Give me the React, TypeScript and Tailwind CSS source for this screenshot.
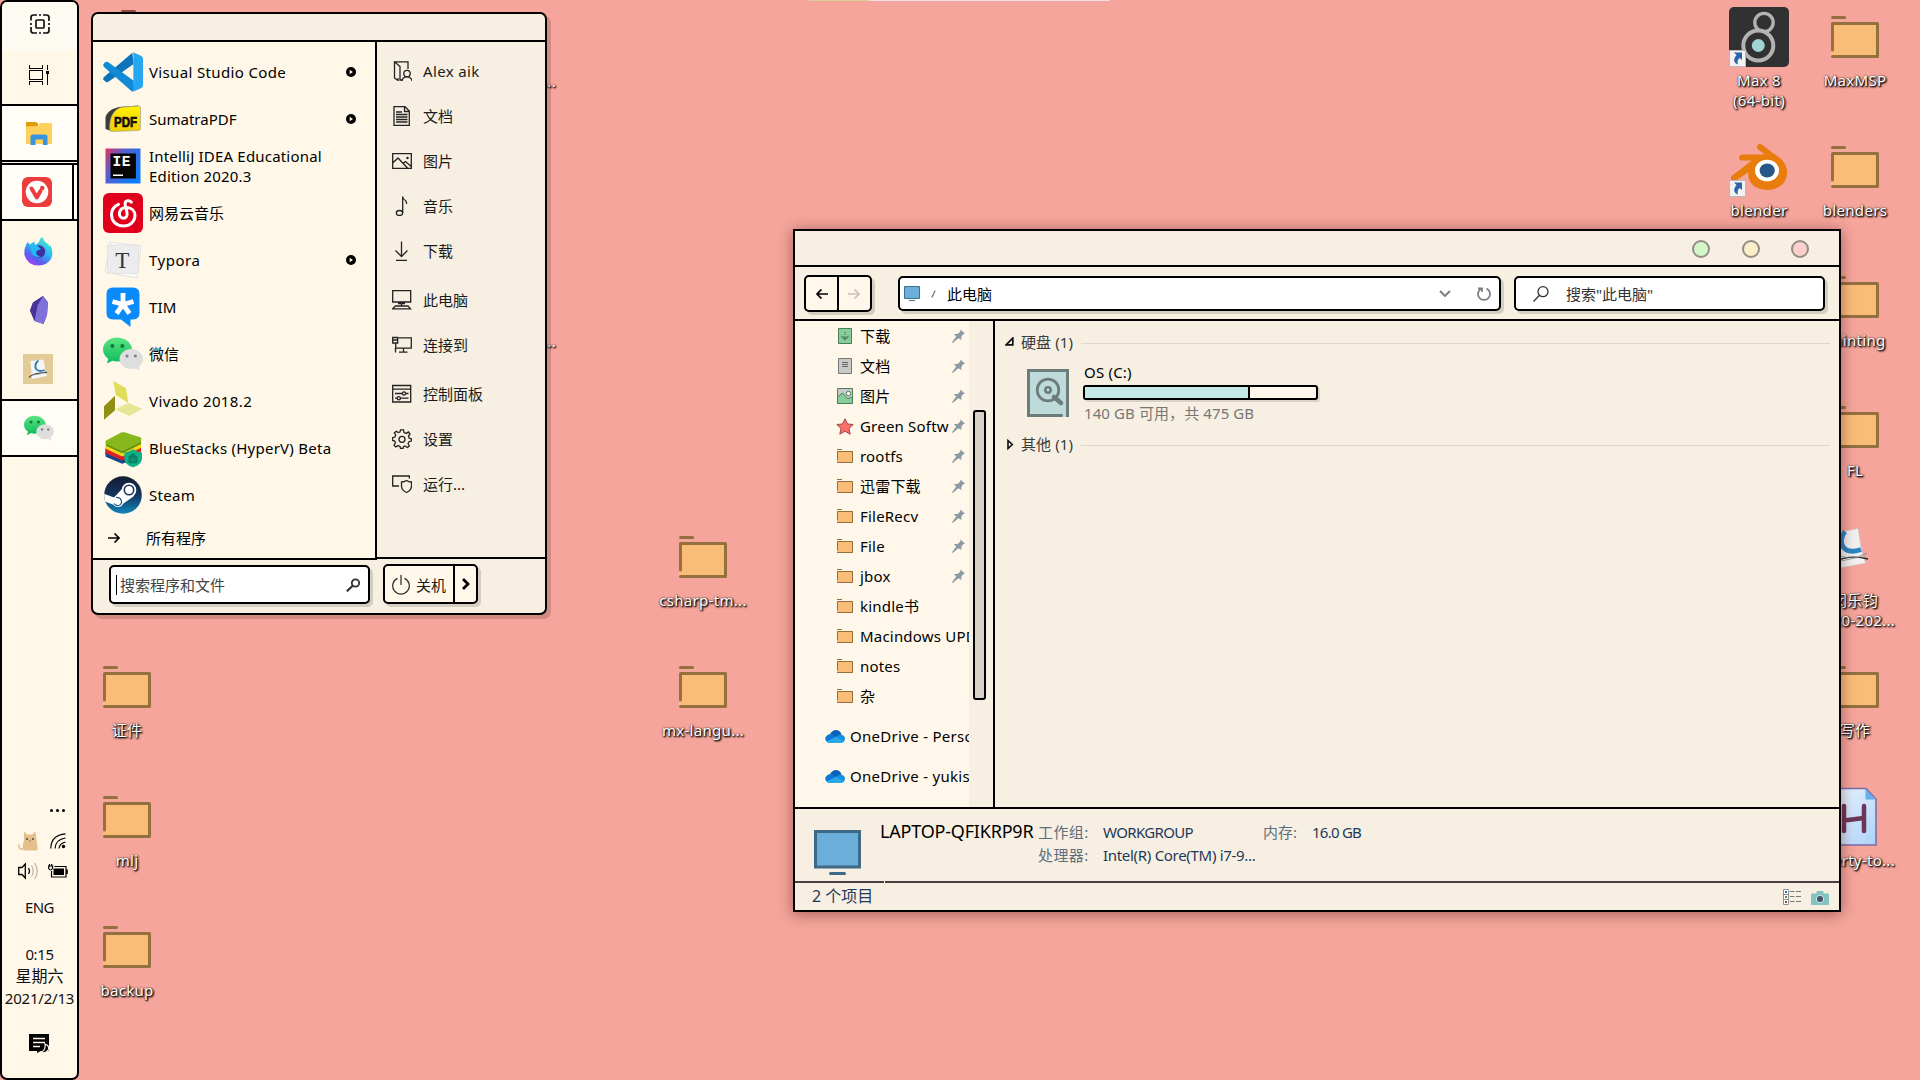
import React from "react";

type Kids = { children?: React.ReactNode };

/* ---------- desktop ---------- */

const Folder = () => (
  <svg width="48" height="42" viewBox="0 0 48 42" fill="none">
    <rect x="0" y="6" width="48" height="36" rx="1" fill="#fabd78" />
    <path d="M1.500 34V7.500H46.500V40.500H1.500" stroke="#94703f" strokeWidth="3" strokeLinecap="round" strokeLinejoin="round" />
    <path d="M1.500 1.500H13.500" stroke="#94703f" strokeWidth="3" strokeLinecap="round" />
  </svg>
);

const Shortcut = () => (
  <svg className="absolute left-0 bottom-0" width="17" height="17" viewBox="0 0 17 17">
    <rect x=".5" y=".5" width="16" height="16" fill="#f3f3f3" stroke="#b9b9b9" />
    <path d="M5 2.500H13V10L10.700 8C8.600 9.500 8.200 11.500 9 14.500C4.500 13 4 8.500 7.600 5.200Z" fill="#2f62a8" />
  </svg>
);

const MaxIcon = () => (
  <div className="relative w-15 h-15">
    <svg width="60" height="60" viewBox="0 0 60 60" fill="none">
      <rect width="60" height="60" rx="5" fill="#313131" />
      <circle cx="35" cy="15.500" r="9.200" stroke="#b2b2b2" strokeWidth="3.300" />
      <circle cx="29.300" cy="38.500" r="15" fill="#313131" stroke="#b2b2b2" strokeWidth="4" />
      <circle cx="29.300" cy="38.500" r="6.500" fill="#9fd4d2" />
    </svg>
    <Shortcut />
  </div>
);

const BlenderIcon = () => (
  <div className="relative w-15 h-15">
    <svg width="60" height="60" viewBox="0 0 60 60" fill="none">
      <path d="M31 10L50 24.500M13 20.500H36M5 41L28 23" stroke="#e87d0d" strokeWidth="6" strokeLinecap="round" />
      <path d="M3 39L25 23L36 17.500L46 17.500L52 22C64 33 58 53 38 53C23 52 18 43 19.500 35L8 43Z" fill="#e87d0d" />
      <ellipse cx="38" cy="33.500" rx="12" ry="10.800" fill="#fff" />
      <ellipse cx="38.200" cy="33.500" rx="7.600" ry="7" fill="#265787" />
    </svg>
    <Shortcut />
  </div>
);

const PdfDoc = () => (
  <svg width="60" height="60" viewBox="0 0 60 60" fill="none">
    <path d="M2 8L33 1.500L36.500 23L40.500 36L10 42L6 30Z" fill="#f1f1f1" stroke="#c9c9c9" strokeWidth=".6" />
    <path d="M20 4.500C12 14 17 29 36 22.500" stroke="#2b86c4" strokeWidth="5" />
    <path d="M6 36C18 30 30 28.500 43 32" stroke="#222" strokeWidth="1.300" />
    <path d="M14 34C24 33 34 30 41 26M16 29C26 32 36 32 42 26" stroke="#888" strokeWidth=".7" />
  </svg>
);

const ScriptIcon = () => (
  <svg width="48" height="60" viewBox="0 0 48 60" fill="none">
    <defs>
      <linearGradient id="ahk" x1="0" y1="0" x2="1" y2="1">
        <stop stopColor="#eef6ff" />
        <stop offset="1" stopColor="#acd3f8" />
      </linearGradient>
    </defs>
    <path d="M1 1.500H35L45 12V58H1Z" fill="url(#ahk)" stroke="#7b6aa8" strokeWidth="1.500" />
    <path d="M34.500 2V12.500H45Z" fill="#68aeea" />
    <path d="M13 19V44M33 19V44M13 33.500L33 31" stroke="#6e3559" strokeWidth="4.500" strokeLinecap="round" />
  </svg>
);

const LABEL =
  "text-white text-[15px] leading-5 tracking-[0.3px] text-center whitespace-nowrap [text-shadow:1px_1px_2px_#000,1px_1px_2px_rgba(0,0,0,0.9),0_0_2px_rgba(0,0,0,0.7)]";

const slots: Record<string, string> = {
  a5: "left-[79px] top-[651px]",
  a6: "left-[79px] top-[781px]",
  a7: "left-[79px] top-[911px]",
  g4: "left-[655px] top-[521px]",
  g5: "left-[655px] top-[651px]",
  y0: "left-[1711px] top-[1px]",
  y1: "left-[1711px] top-[131px]",
  z0: "left-[1807px] top-[1px]",
  z1: "left-[1807px] top-[131px]",
  z2: "left-[1807px] top-[261px]",
  z3: "left-[1807px] top-[391px]",
  z4: "left-[1807px] top-[521px]",
  z5: "left-[1807px] top-[651px]",
  z6: "left-[1807px] top-[781px]",
};

const Desk = ({ at, art, children }: Kids & { at: string; art?: React.ReactNode }) => (
  <div className={`absolute w-24 flex flex-col items-center ${slots[at]}`}>
    {art ? (
      <div className="pt-1.5 h-[69px] flex justify-center">{art}</div>
    ) : (
      <div className="pt-[15px] h-[69px]">
        <Folder />
      </div>
    )}
    <div className={LABEL}>{children}</div>
  </div>
);

/* ---------- application icons ---------- */

const WeChat = ({ s = 40 }: { s?: number }) => (
  <svg width={s} height={s} viewBox="0 0 40 40">
    <defs>
      <linearGradient id="wc" x1="0" y1="0" x2="0" y2="1">
        <stop stopColor="#5be681" />
        <stop offset="1" stopColor="#0cb95b" />
      </linearGradient>
    </defs>
    <path d="M14 3.500C6 3.500 0 9 0 15.500C0 19.500 2 22.500 5.200 24.800L4 29.500L9.400 26.800C11 27.200 12.600 27.500 14 27.500C22 27.500 29 22 29 15.500S22 3.500 14 3.500Z" fill="url(#wc)" />
    <circle cx="9.300" cy="12" r="2" fill="#15763f" />
    <circle cx="19.300" cy="12" r="2" fill="#15763f" />
    <path d="M28.300 15C22 15 16.500 19.500 16.500 25S22 35 28.300 35C29.600 35 31 34.800 32.200 34.400L36.500 36.500L35.500 32.700C38.500 30.500 40 28 40 25C40 19.500 34.600 15 28.300 15Z" fill="#dedede" />
    <circle cx="24" cy="22" r="1.600" fill="#838383" />
    <circle cx="32.300" cy="22" r="1.600" fill="#838383" />
  </svg>
);

const VsCode = () => (
  <svg width="40" height="40" viewBox="0 0 120 120">
    <path d="M88 2L92 36L15 90Q10 92 6 88L1 82Q0 78 3 75Z" fill="#0b74ba" />
    <path d="M3 45L86 118Q90 121 93 112L92 86L15 30Q10 28 6 31L1 37Q0 41 3 45Z" fill="#118bd6" />
    <path d="M89 0L115 12Q120 15 120 20V100Q120 106 115 108L89 120Q92 117 91 110V10Q92 3 89 0Z" fill="#27a6f2" />
  </svg>
);

const Sumatra = () => (
  <svg width="40" height="40" viewBox="0 0 40 40">
    <defs>
      <linearGradient id="sp" x1="0" y1="0" x2="0" y2="1">
        <stop stopColor="#fff200" />
        <stop offset="1" stopColor="#f0cd00" />
      </linearGradient>
    </defs>
    <path d="M2.500 30V18C5 11 12 8 22 7.500L36 6.500L24 14L8 32Z" fill="#3b3b3b" />
    <path d="M7 31C6 20 10 9 21 8L35.500 7Q37.500 7 37.500 9V29Q37.500 31.500 35 31.500L9 32.500Q7 32.500 7 31Z" fill="url(#sp)" stroke="#b5aa84" strokeWidth=".8" />
    <text x="11" y="27.500" textLength="23" lengthAdjust="spacingAndGlyphs" fontFamily="Liberation Sans" fontWeight="900" fontSize="14" stroke="#111" strokeWidth=".7" fill="#111">PDF</text>
  </svg>
);

const Idea = () => (
  <svg width="40" height="40" viewBox="0 0 40 40">
    <defs>
      <linearGradient id="ij" x1="0" y1="0" x2="1" y2=".7">
        <stop stopColor="#e0325f" />
        <stop offset=".4" stopColor="#5560d0" />
        <stop offset="1" stopColor="#0b7dfb" />
      </linearGradient>
    </defs>
    <rect x="2.500" y="2.500" width="35" height="35" fill="url(#ij)" />
    <rect x="7.500" y="7.500" width="25.500" height="25" fill="#050505" />
    <text x="9.500" y="20" fontFamily="Liberation Mono" fontWeight="700" fontSize="14.500" textLength="18" fill="#fff">IE</text>
    <rect x="10" y="28.500" width="10" height="1.500" fill="#fff" />
  </svg>
);

const NetEase = () => (
  <svg width="40" height="40" viewBox="0 0 40 40" fill="none">
    <rect width="40" height="40" rx="6" fill="#e0001b" />
    <path d="M28.500 9.200C26.500 7 22.300 7 22.100 10.300C22 12 23.300 16 24 19.500C24.700 23.500 22.800 25.200 20.400 25.200C17.500 25.200 16 22.500 16.500 19.500C17.200 16 20.500 14.500 23.600 14.500C28.500 14.600 32 17.800 32 22.600C32 28.700 26.800 33 20.500 33C13.500 33 8.500 28.500 8.500 21.800C8.500 17 11 13.200 15.500 11.300" stroke="#fff" strokeWidth="3" strokeLinecap="round" />
  </svg>
);

const Typora = () => (
  <svg width="40" height="40" viewBox="0 0 40 40">
    <path d="M7 2L38 6L34 38L2 32Z" fill="#fafafa" stroke="#d8d8d8" strokeWidth=".7" />
    <rect x="4.500" y="5" width="31" height="28.500" fill="#ececec" stroke="#dadada" strokeWidth=".6" />
    <text x="19.300" y="28" textAnchor="middle" fontFamily="Liberation Serif" fontSize="23" fill="#333">T</text>
  </svg>
);

const Tim = () => (
  <svg width="40" height="40" viewBox="0 0 40 40">
    <path d="M10 0.500H30Q36.500 .5 36.500 7V26Q36.500 32 30 32.500H27.500V40L18 32.500H10Q3.500 32.500 3.500 26V7Q3.500 .5 10 .5Z" fill="#0a8bfb" />
    <path d="M20 6V17.500M20 17.500L9.500 14.500M20 17.500L30.500 14.500M20 17.500L13.500 26.500M20 17.500L26.500 26.500" stroke="#fff" strokeWidth="4.800" />
  </svg>
);

const Vivado = () => (
  <svg width="40" height="40" viewBox="0 0 120 120">
    <path d="M31 0L69 22L76 66L38 42Z" fill="#dede5c" />
    <path d="M3 76L36 44V88L3 116Z" fill="#8f8f14" />
    <path d="M36 85L76 66L118 83L79 105Z" fill="#e5e693" />
  </svg>
);

const BlueStacks = () => (
  <svg width="40" height="40" viewBox="0 0 120 120">
    <path d="M6 72L50 50L114 66V88L62 106Q58 108 54 106L8 86Z" fill="#15468f" />
    <path d="M6 62L50 46L114 58V76L62 96Q58 98 54 96L8 76Z" fill="#d9202b" />
    <path d="M6 54L50 40L114 44V60L62 84Q58 86 54 84L8 62Z" fill="#f6d416" />
    <path d="M8 38L56 13Q60 12 64 13L112 28Q116 31 114 46L62 72Q58 74 54 72L9 50Q6 46 8 38Z" fill="#86b81b" />
    <path d="M9 48L54 68Q58 70 62 68L114 42V48L62 74Q58 76 54 74L9 53Z" fill="#5f9214" />
    <path d="M64 74Q80 72 90 64Q100 72 117 74V92Q115 110 90 118Q66 110 64 92Z" fill="#0fb184" />
    <path d="M78 86H102V104H78ZM83 86V82Q90 72 97 82V86" fill="#0d8a6a" stroke="#0a7a60" strokeWidth="3" />
    <circle cx="90" cy="95" r="3" fill="#0fb184" />
  </svg>
);

const Steam = () => (
  <svg width="40" height="40" viewBox="0 0 40 40" fill="none">
    <defs>
      <linearGradient id="st" x1="0" y1="0" x2="0" y2="1">
        <stop stopColor="#141d31" />
        <stop offset=".5" stopColor="#14335f" />
        <stop offset="1" stopColor="#1287bd" />
      </linearGradient>
      <clipPath id="stc">
        <circle cx="20" cy="20" r="18.800" />
      </clipPath>
    </defs>
    <circle cx="20" cy="20" r="18.800" fill="url(#st)" />
    <g clipPath="url(#stc)">
      <path d="M0 18.500L11 22.500L19 14L31 21L20.500 28.500L14 31L0 26Z" fill="#fff" />
      <circle cx="26" cy="15" r="7.300" fill="#fff" />
      <circle cx="26" cy="15" r="4.700" fill="#fff" stroke="#1b3158" strokeWidth="1.600" />
      <circle cx="15" cy="26.500" r="5.500" fill="#fff" />
      <path d="M13 22.500C19 22 20.500 29.500 15.500 30.500C13.500 30.700 12 30 11 28.500" stroke="#1a4f80" strokeWidth="1.200" />
    </g>
  </svg>
);

/* ---------- taskbar ---------- */

const ScreenSnip = () => (
  <svg width="20" height="20" viewBox="0 0 20 20" fill="none" stroke="#111" strokeWidth="1.700">
    <path d="M1 6.500V3.500Q1 1 3.500 1H7M9 1H11M13 1H16.500Q19 1 19 3.500V7M19 13V16.500Q19 19 16.500 19H13M7 19H3.500Q1 19 1 16.500V13M1 9V11M19 9V11M9 19H11" />
    <rect x="6" y="6" width="8" height="8" rx="1" />
  </svg>
);
const TaskView = () => (
  <svg width="20" height="20" viewBox="0 0 20 20" fill="none" stroke="#000" shapeRendering="crispEdges">
    <path d="M.5 0V3.500H13.500V0M.5 20V16.500H13.500V20M.5 5.500H13.500V14.500H.5ZM18.500 0V5M18.500 9V20" />
    <rect x="17" y="6" width="3" height="3" fill="#000" stroke="none" />
  </svg>
);
const ExplorerIcon = () => (
  <svg width="26" height="23" viewBox="0 0 26 23">
    <path d="M0 0H10L12 1.500V5H0Z" fill="#dd9c08" />
    <path d="M0 4.500L12 4L14 1H26V22H0Z" fill="#ffd15c" />
    <path d="M4.500 23V15Q4.500 12.500 7 12.500H19Q21.500 12.500 21.500 15V23H17V17.500H9.500V23Z" fill="#3695dd" />
  </svg>
);
const VivaldiIcon = () => (
  <svg width="30" height="30" viewBox="0 0 30 30" fill="none">
    <rect width="30" height="30" rx="6" fill="#ed3c3c" />
    <circle cx="15" cy="15" r="11.300" fill="#fff" />
    <path d="M9.500 11.500L14.800 20.500L18.500 14" stroke="#ed3c3c" strokeWidth="4" strokeLinecap="round" strokeLinejoin="round" />
    <circle cx="20.300" cy="11" r="2.300" fill="#ed3c3c" />
  </svg>
);
const FirefoxIcon = () => (
  <svg width="29" height="30" viewBox="0 0 29 30">
    <defs>
      <linearGradient id="ff" x1=".8" y1="0" x2=".2" y2="1">
        <stop stopColor="#4bf0c8" />
        <stop offset=".45" stopColor="#2fb4f5" />
        <stop offset=".75" stopColor="#5b5cf0" />
        <stop offset="1" stopColor="#b53cf2" />
      </linearGradient>
    </defs>
    <path d="M2 9L3.500 6L6 8.500L10 5.500L11.500 9L15 6Q16 2 18.500 1Q20 6 24 8L25.500 10.500L26.500 9Q30 17 27 23Q22 30 14 29.500Q3 29 .5 19Q0 13 2 9Z" fill="url(#ff)" />
    <circle cx="15" cy="15.500" r="6.200" fill="#40309f" />
    <path d="M5 9L13 9.500L17 13L12.500 15Q11 20 17 20Q11 23 8 17Z" fill="#25b9f4" />
  </svg>
);
const ObsidianIcon = () => (
  <svg width="18" height="28" viewBox="0 0 18 28">
    <path d="M13 0L18 6.500L17 19L13.500 28L4.500 25L0 14.500L3 6.500Z" fill="#5a45b5" />
    <path d="M13 0L18 6.500L17 19L13.500 28L4.500 25L7.500 9Z" fill="#8070da" />
    <path d="M3 6.500L13 0L7.500 9L4.500 25L0 14.500Z" fill="#493596" />
  </svg>
);
const ReaderIcon = () => (
  <div className="w-[30px] h-[30px] bg-[#e2cb97]">
    <svg width="30" height="30" viewBox="0 0 30 30" fill="none">
      <path d="M7.500 7L20.500 5.500L22.500 17L24 22L9 25Z" fill="#f6f6f6" />
      <path d="M15.500 6.500Q11 10 13 15Q16 18.500 21.500 16" stroke="#2c7fba" strokeWidth="1.900" />
      <path d="M6 23.500Q9 19 24 18.500" stroke="#333" strokeWidth="1.100" />
      <path d="M9 21Q18 21 23 17" stroke="#888" strokeWidth=".7" />
    </svg>
  </div>
);
const Cat = () => (
  <svg width="21" height="20" viewBox="0 0 21 20" fill="none">
    <path d="M5 18Q.5 19 .8 13.500" stroke="#e0be8e" strokeWidth="1.600" />
    <path d="M6 .5L9 3.500H14L17.500 .5L18.500 9Q20.500 19 19 19.500H6Q3.500 17 6 9Z" fill="#e6c08c" />
    <circle cx="9" cy="8" r=".9" fill="#4a3a2a" />
    <circle cx="15" cy="8" r=".9" fill="#4a3a2a" />
    <circle cx="12" cy="10" r=".7" fill="#7a5a3a" />
  </svg>
);
const Wifi = () => (
  <svg width="17" height="16" viewBox="0 0 17 16" fill="none" stroke="#000" strokeWidth="1.200">
    <path d="M.8 15.500Q1 2 15.500 .8M5 15.500Q5.500 6.500 15.500 5M9 15.500Q9.500 10.500 15.500 9" />
    <circle cx="13.500" cy="13.500" r="1.700" fill="#000" stroke="none" />
  </svg>
);
const Speaker = () => (
  <svg width="21" height="18" viewBox="0 0 21 18" fill="none">
    <path d="M.7 5.500H4L7.300 2V16L4 12.500H.7Z" stroke="#000" strokeWidth="1.300" />
    <path d="M10.500 6Q12.500 9 10.500 12" stroke="#000" strokeWidth="1.200" />
    <path d="M13.500 3.500Q17 9 13.500 14.500M16.500 .8Q22 9 16.500 17.200" stroke="#b9b3a9" strokeWidth="1.200" />
  </svg>
);
const Battery = () => (
  <svg width="20" height="14" viewBox="0 0 20 14" fill="none">
    <path d="M6.500 2.500H18V13H3.500V7M19.200 5.500V10" stroke="#000" strokeWidth="1.200" />
    <rect x="5.500" y="4.500" width="10.500" height="6.500" fill="#000" />
    <path d="M.7 1.500V4.500Q2.500 7.500 4.500 4.500V1.500M1.500 0V2M3.700 0V2M0 2H5.300" stroke="#000" strokeWidth="1.200" />
  </svg>
);
const Notice = () => (
  <svg width="21" height="20" viewBox="0 0 21 20" fill="none">
    <path d="M0 0H20V17H12L8 19V17H0Z" fill="#000" />
    <path d="M4 4.500H16M4 8.500H16M4 12.500H11" stroke="#fff8ea" strokeWidth="1.300" />
    <path d="M16 10Q20.500 11.500 19.500 15.500Q17 20.500 12 18Q17 16.500 16 10Z" fill="#000" stroke="#fff8ea" strokeWidth="1.200" />
  </svg>
);

const Taskbar = () => (
  <div className="absolute left-0 top-0 w-[79px] h-[1080px] flex flex-col items-stretch border-2 border-black rounded-[7px] bg-[#fff8e9] overflow-hidden text-[15px] text-[#111]">
    <div className="-mx-0.5 -mt-0.5 h-[50px] shrink-0 flex items-start justify-center pt-3.5 rounded-t-[7px] border-2 border-b-0 border-[#4c4a46] bg-[#fefbf3]">
      <div className="-mt-0.5">
        <ScreenSnip />
      </div>
    </div>
    <div className="h-[54px] shrink-0 flex justify-center pt-[15px] pr-px">
      <TaskView />
    </div>
    <div className="h-[58px] shrink-0 flex items-center justify-center border-y-2 border-black bg-[#fffdf6] pr-px">
      <ExplorerIcon />
    </div>
    <div className="mt-px h-[58px] shrink-0 flex border-y-2 border-black bg-[#fffdf6]">
      <div className="w-[72px] flex items-center justify-center border-r-2 border-black">
        <VivaldiIcon />
      </div>
    </div>
    <div className="h-[59px] shrink-0 flex items-center justify-center pr-0.5">
      <FirefoxIcon />
    </div>
    <div className="h-[60px] shrink-0 flex items-center justify-center pr-px">
      <ObsidianIcon />
    </div>
    <div className="h-[59px] shrink-0 flex items-center justify-center pr-[3px] pb-px">
      <ReaderIcon />
    </div>
    <div className="h-[58px] shrink-0 flex items-center justify-center border-y-2 border-black bg-[#fffdf6] pr-0.5">
      <WeChat s={30} />
    </div>
    <div className="flex-1" />
    <div className="flex flex-col items-center h-[269px] shrink-0">
      <div className="w-full flex justify-end gap-[3px] pr-3">
        <i className="w-[3px] h-[3px] rounded-full bg-black" />
        <i className="w-[3px] h-[3px] rounded-full bg-black" />
        <i className="w-[3px] h-[3px] rounded-full bg-black" />
      </div>
      <div className="w-full flex items-center justify-between pl-4 pr-[10px] mt-[19px] h-5">
        <Cat />
        <Wifi />
      </div>
      <div className="w-full flex items-center justify-between pl-4 pr-[9px] mt-[10px] h-5">
        <Speaker />
        <Battery />
      </div>
      <div className="mt-4 leading-5 h-5 tracking-[-0.6px]">ENG</div>
      <div className="mt-[26px] leading-[22px] flex flex-col items-center">
        <span className="tracking-[-0.4px]">0:15</span>
        <span className="text-[16px]">星期六</span>
        <span className="tracking-[-0.2px]">2021/2/13</span>
      </div>
      <div className="mt-[25px] pr-px">
        <Notice />
      </div>
    </div>
  </div>
);

/* ---------- start menu ---------- */

const apps: { icon: React.ReactNode; name: React.ReactNode; more?: boolean; fit?: string }[] = [
  { icon: <VsCode />, name: "Visual Studio Code", more: true, fit: "tracking-[0.35px]" },
  { icon: <Sumatra />, name: "SumatraPDF", more: true },
  { icon: <Idea />, name: <>IntelliJ IDEA Educational<br />Edition 2020.3</>, fit: "tracking-[0.19px]" },
  { icon: <NetEase />, name: "网易云音乐" },
  { icon: <Typora />, name: "Typora", more: true, fit: "tracking-[0.5px]" },
  { icon: <Tim />, name: "TIM", fit: "tracking-[0.2px]" },
  { icon: <WeChat />, name: "微信" },
  { icon: <Vivado />, name: "Vivado 2018.2", fit: "tracking-[0.4px]" },
  { icon: <BlueStacks />, name: "BlueStacks (HyperV) Beta", fit: "tracking-[0.25px]" },
  { icon: <Steam />, name: "Steam", fit: "tracking-[0.3px]" },
];

const More = () => (
  <svg width="10" height="10" viewBox="0 0 10 10">
    <circle cx="5" cy="5" r="5" fill="#000" />
    <path d="M3.700 2.700L7 5L3.700 7.300Z" fill="#fef7e9" />
  </svg>
);

const Line = ({ children }: Kids) => (
  <svg width="20" height="20" viewBox="0 0 20 20" fill="none" stroke="#222" strokeWidth="1.300">
    {children}
  </svg>
);

const places: { name: string; art: React.ReactNode; gap?: boolean }[] = [
  {
    name: "Alex aik",
    art: (
      <Line>
        <path d="M10.500 19H8V5.500L2.500 .8V17L6 19.500V17M2.500 .8H16V8" />
        <circle cx="15" cy="12.500" r="3.200" />
        <path d="M10 20Q10.500 15.800 15 15.800T20 20" />
      </Line>
    ),
  },
  {
    name: "文档",
    art: (
      <Line>
        <path d="M2 .7H13L17.300 5V19.300H2ZM12.500 .7V5.500H17.300M4 6H10M4 8.500H15.500M4 11H15.500M4 13.500H15.500M4 16H15.500" />
      </Line>
    ),
  },
  {
    name: "图片",
    art: (
      <Line>
        <path d="M.7 2.700H19.300V17.300H.7ZM.7 12L6 7L15.500 17M11 12.500L13.500 10.500L19.300 15.500" />
        <circle cx="15.500" cy="7" r=".6" />
      </Line>
    ),
  },
  {
    name: "音乐",
    art: (
      <Line>
        <ellipse cx="7.500" cy="17" rx="3.200" ry="2.500" />
        <path d="M10.700 17V.5Q11 3.500 13.500 4.500Q14.800 5.500 14.500 8" />
      </Line>
    ),
  },
  {
    name: "下载",
    gap: true,
    art: (
      <Line>
        <path d="M9.500 .5V15.500M3.500 9.500L9.500 15.500L15.500 9.500M4 19.300H15" />
      </Line>
    ),
  },
  {
    name: "此电脑",
    art: (
      <Line>
        <path d="M.7 .7H18.700V12H.7ZM9.500 12V15.500M6 13.500H13M3.500 16H16L18.500 18.800H.7Z" />
      </Line>
    ),
  },
  {
    name: "连接到",
    gap: true,
    art: (
      <Line>
        <path d="M6.500 2.800H19.300V13.200H3.700V8M.7 2.500H5.700V8H.7ZM.7 5H5.700M11.500 13.200V17M7 17.200H15.500M3.500 13V17.500" />
      </Line>
    ),
  },
  {
    name: "控制面板",
    art: (
      <Line>
        <path d="M.7 1.500H18.700V18H.7ZM.7 5.200H18.700M3 9.500H10M13.500 9.500H16.500M3 14.200H5M8.500 14.200H16.500" />
        <circle cx="12" cy="9.500" r="1.600" />
        <circle cx="6.800" cy="14.200" r="1.600" />
      </Line>
    ),
  },
  {
    name: "设置",
    art: (
      <Line>
        <path d="M8.500 .8H11.500L12 3.500L14.200 4.400L16.500 2.900L18 5L16.500 7L17 9L19.300 9.800V12L17 12.700L16 14.800L17.400 17L15.300 18.500L13 17L11.500 17.700L11 19.500H8.500L8 17.500L6 16.600L3.700 18L2 16.200L3.500 13.800L2.700 12L.5 11.500V8.800L2.900 8L3.700 6L2.300 3.900L4.200 2.200L6.300 3.600L8 3Z" />
        <circle cx="10" cy="10.300" r="3" />
      </Line>
    ),
  },
  {
    name: "运行...",
    art: (
      <Line>
        <path d="M7 12H.7V2H17.300V4.500M14.500 6.500Q12.500 8 9.500 8V12.500Q10 16.500 14.500 18.500Q19 16.500 19.500 12.500V8Q16.500 8 14.500 6.500Z" />
      </Line>
    ),
  },
];

const StartMenu = () => (
  <div className="absolute left-[91px] top-3 w-[456px] h-[603px] flex flex-col border-2 border-black rounded-[7px] overflow-hidden bg-[#f7f0e2] text-[15px] text-black">
    <div className="h-7 shrink-0 border-b-2 border-black" />
    <div className="flex h-[518px] shrink-0 items-start">
      <div className="w-[284px] h-[518px] flex flex-col bg-[#fff8e9] border-r-2 border-b-2 border-black pt-[6px]">
        {apps.map((a, i) => (
          <div key={i} className="h-[47px] shrink-0 flex items-center pl-2.5 pr-[19px]">
            {a.icon}
            <span className={`ml-1.5 flex-1 leading-5 whitespace-nowrap ${a.fit ?? ""}`}>{a.name}</span>
            {a.more && <More />}
          </div>
        ))}
        <div className="h-10 flex items-center pl-[15px]">
          <svg className="mb-px" width="12" height="10" viewBox="0 0 12 10" fill="none" stroke="#000" strokeWidth="1.600">
            <path d="M0 5H11M6.500 .5L11 5L6.500 9.500" />
          </svg>
          <span className="ml-[26px]">所有程序</span>
        </div>
      </div>
      <div className="flex-1 h-[517px] border-b-2 border-black pt-1.5">
        {places.map((p, i) => (
          <div key={p.name} className={`h-[45px] flex items-center pl-[15px] text-[#1b1b1b] ${p.gap ? "mb-1" : ""}`}>
            {p.art}
            <span className={`ml-[11px] pt-px ${i ? "" : "tracking-[0.35px]"}`}>{p.name}</span>
          </div>
        ))}
      </div>
    </div>
    <div className="flex-1 flex items-start pl-4 pt-[5px]">
      <div className="w-[261px] h-[39px] flex items-center border-2 border-black rounded-[5px] bg-white shadow-[3px_3px_0_rgba(0,0,0,0.14)]">
        <i className="ml-[5px] w-px h-5 bg-black" />
        <span className="ml-[3px] pt-0.5 flex-1 text-[#444]">搜索程序和文件</span>
        <svg className="mr-[7px]" width="15" height="14" viewBox="0 0 15 14" fill="none" stroke="#333" strokeWidth="1.800">
          <circle cx="9.500" cy="5" r="3.700" />
          <path d="M7 7.500L.8 13.300" strokeWidth="2.200" />
        </svg>
      </div>
      <div className="ml-[13px] -mt-px w-[95px] h-10 flex border-2 border-black rounded-[5px] bg-[#fff8ea] shadow-[3px_3px_0_rgba(0,0,0,0.14)]">
        <div className="w-[70px] flex items-center border-r-2 border-black pl-[7px] pt-px">
          <svg width="18" height="20" viewBox="0 0 18 20" fill="none" stroke="#333" strokeWidth="1.300">
            <path d="M5.500 3.300A8.300 8.300 0 1 0 12.500 3.300M9 0V10" />
          </svg>
          <span className="ml-1.5 pt-0.5 whitespace-nowrap text-[#1b1b1b]">关机</span>
        </div>
        <div className="flex-1 flex items-center justify-center">
          <svg width="8" height="12" viewBox="0 0 8 12" fill="none" stroke="#000" strokeWidth="2.800">
            <path d="M1 1L6 6L1 11" />
          </svg>
        </div>
      </div>
    </div>
  </div>
);

/* ---------- explorer window ---------- */

const SmallFolder = () => (
  <svg width="16" height="14" viewBox="0 0 16 14" fill="none">
    <rect y="2" width="16" height="12" fill="#fabd78" />
    <path d="M.5 11.500V2.500H15.500V13.500H0M0 .5H5" stroke="#94703f" />
  </svg>
);
const DownloadIcon = () => (
  <svg width="16" height="16" viewBox="0 0 16 16" fill="none">
    <path d="M1.500 .5H14.500V15.500H1.500Z" fill="#86cd9a" stroke="#4e7d5d" />
    <path d="M8 4V5M8 6V7M8 8V11.500M4.500 8L8 11.500L11.500 8" stroke="#4e7d5d" strokeWidth="1.300" />
  </svg>
);
const DocIcon = () => (
  <svg width="16" height="16" viewBox="0 0 16 16" fill="none">
    <path d="M1.500 .5H14.500V15.500H1.500Z" fill="#c9c9c9" stroke="#777" />
    <path d="M5 4.500H11M5 6.500H11M5 8.500H11" stroke="#666" />
  </svg>
);
const PicIcon = () => (
  <svg width="16" height="16" viewBox="0 0 16 16" fill="none">
    <path d="M.5 .5H15.500V15.500H.5Z" fill="#c9c9c9" />
    <path d="M.5 9L5.500 5L10.500 10.500L15.500 9.500V15.500H.5Z" fill="#86cd9a" stroke="#4e7d5d" />
    <circle cx="11.500" cy="5.500" r="2.200" fill="#fff8ea" stroke="#4e7d5d" />
    <path d="M.5 .5H15.500V15.500H.5Z" stroke="#4e7d5d" />
  </svg>
);
const StarIcon = () => (
  <svg width="18" height="17" viewBox="0 0 18 17" className="shrink-0">
    <path d="M9 .8L11.500 6L17.200 6.500L13 10.500L14.200 16.200L9 13.300L3.800 16.200L5 10.500L.8 6.500L6.500 6Z" fill="#fa6e6b" stroke="#a04846" />
  </svg>
);
const Pin = () => (
  <svg width="13" height="14" viewBox="0 0 13 14" fill="#8d99a3">
    <path d="M8.500 .5L13 4.800L11 5.300L9.300 8L9.500 11L6.300 9.300L.8 14L0 13.300L4.200 7.500L1.800 5L5.500 5L8.200 2.800Z" />
  </svg>
);
const OneDrive = () => (
  <svg className="shrink-0" width="20" height="13" viewBox="0 0 20 13">
    <path d="M5 4.500Q7 0 11 0Q15 0 16.500 4.500L10 8Z" fill="#0a63b8" />
    <path d="M2 12Q-1 9 1 6.500Q3 3.500 6 4L14 8.500L6 12Z" fill="#0d78d4" />
    <path d="M10 7L16 4.500Q20 5.500 20 8.500Q20 11 18 12Z" fill="#1490df" />
    <path d="M1.500 11.500L11 6.800L19 11.500Q18 13 16.500 13H4Q2.500 13 1.500 11.500Z" fill="#28a8ea" />
  </svg>
);
const Monitor = () => (
  <svg width="16" height="16" viewBox="0 0 16 16" fill="none">
    <path d="M.5 .5H15.500V12.500H.5Z" fill="#6baed9" stroke="#3f6f8f" />
    <path d="M5 14.500H11" stroke="#3f6f8f" />
  </svg>
);

const quick: { icon: React.ReactNode; name: string; pin?: boolean }[] = [
  { icon: <DownloadIcon />, name: "下载", pin: true },
  { icon: <DocIcon />, name: "文档", pin: true },
  { icon: <PicIcon />, name: "图片", pin: true },
  { icon: <StarIcon />, name: "Green Softw", pin: true },
  { icon: <SmallFolder />, name: "rootfs", pin: true },
  { icon: <SmallFolder />, name: "迅雷下载", pin: true },
  { icon: <SmallFolder />, name: "FileRecv", pin: true },
  { icon: <SmallFolder />, name: "File", pin: true },
  { icon: <SmallFolder />, name: "jbox", pin: true },
  { icon: <SmallFolder />, name: "kindle书" },
  { icon: <SmallFolder />, name: "Macindows UPD" },
  { icon: <SmallFolder />, name: "notes" },
  { icon: <SmallFolder />, name: "杂" },
];

const FIELD = "h-[35px] flex items-center border-2 border-black rounded-[5px] bg-white shadow-[3px_3px_0_rgba(0,0,0,0.14)]";

const Explorer = () => (
  <div className="absolute left-[793px] top-[229px] w-[1048px] h-[683px] flex flex-col border-2 border-black bg-[#f7f0e2] text-[15px] text-black shadow-[0_2px_14px_rgba(60,0,0,0.45)]">
    <div className="h-9 shrink-0 flex items-center justify-end border-b-2 border-black pr-[30px] pt-0.5">
      <i className="w-[18px] h-[18px] mr-8 rounded-full border-2 border-[#938d83] bg-[#d4f6c9]" />
      <i className="w-[18px] h-[18px] mr-[31px] rounded-full border-2 border-[#938d83] bg-[#faefc8]" />
      <i className="w-[18px] h-[18px] rounded-full border-2 border-[#938d83] bg-[#fbcfca]" />
    </div>
    <div className="h-[54px] shrink-0 flex items-start border-b-2 border-black pl-[9px] pt-[9px]">
      <div className="-mt-px w-[68px] h-[37px] flex border-2 border-black rounded-[5px] bg-[#fff8ea] shadow-[3px_3px_0_rgba(0,0,0,0.14)]">
        <div className="w-[33px] flex items-center justify-center border-r-2 border-black pl-px">
          <svg width="12" height="10" viewBox="0 0 12 10" fill="none" stroke="#000" strokeWidth="1.700">
            <path d="M12 5H1M5.500 .5L1 5L5.500 9.500" />
          </svg>
        </div>
        <div className="flex-1 flex items-center justify-center pr-0.5">
          <svg width="12" height="10" viewBox="0 0 12 10" fill="none" stroke="#c9c2b5" strokeWidth="1.700">
            <path d="M0 5H11M6.500 .5L11 5L6.500 9.500" />
          </svg>
        </div>
      </div>
      <div className={`${FIELD} ml-[26px] w-[603px] pl-1`}>
        <Monitor />
        <svg className="ml-[11px]" width="5" height="8" viewBox="0 0 5 8">
          <path d="M.8 7.500L4.200 .5" stroke="#777" strokeWidth="1.300" />
        </svg>
        <span className="ml-[11px] pt-px flex-1">此电脑</span>
        <svg className="mt-px" width="12" height="8" viewBox="0 0 12 8" fill="none" stroke="#7c7c7c" strokeWidth="1.900">
          <path d="M1 1L6 6L11 1" />
        </svg>
        <svg className="ml-[26px] mr-2" width="14" height="14" viewBox="0 0 14 14" fill="none" stroke="#7c7c7c" strokeWidth="1.700">
          <path d="M4.500 1.500A6 6 0 1 0 9.500 1.500M1 1.300H5V5" />
        </svg>
      </div>
      <div className={`${FIELD} ml-[13px] w-[311px] pl-[17px]`}>
        <svg width="16" height="16" viewBox="0 0 16 16" fill="none" stroke="#333" strokeWidth="1.300">
          <circle cx="10" cy="5.700" r="5" />
          <path d="M6.500 9.300L.5 15.500" />
        </svg>
        <span className="ml-[17px] pt-px text-[#333]">搜索"此电脑"</span>
      </div>
    </div>
    <div className="h-[486px] shrink-0 flex">
      <div className="w-[174px] overflow-hidden bg-[#fff8ea]">
        {quick.map((q) => (
          <div key={q.name} className="h-[30px] flex items-center pl-[42px]">
            <span className="w-4 flex justify-center">{q.icon}</span>
            <span className={`ml-[7px] shrink-0 whitespace-nowrap tracking-[0.2px] ${q.pin ? "w-[90px]" : "w-32"}`}>{q.name}</span>
            {q.pin && (
              <span className="ml-[2px] shrink-0">
                <Pin />
              </span>
            )}
          </div>
        ))}
        {["OneDrive - Perso", "OneDrive - yukis."].map((n, i) => (
          <div key={n} className={`h-10 flex items-center pl-[30px] whitespace-nowrap tracking-[0.3px] ${i ? "" : "mt-[5px]"}`}>
            <OneDrive />
            <span className="ml-[5px]">{n}</span>
          </div>
        ))}
      </div>
      <div className="w-6 pl-1 pt-[89px]">
        <div className="w-[13px] h-[290px] border-2 border-black rounded-[3px] bg-[#d7d2c7]" />
      </div>
      <div className="flex-1 border-l-2 border-black pt-[9px]">
        <div className="h-[26px] flex items-center pl-[10px] pr-[9px] text-[#3b3b3b]">
          <svg className="mb-1" width="9" height="9" viewBox="0 0 9 9" fill="none" stroke="#111" strokeWidth="1.700">
            <path d="M7.800 1V7.800H1.200Z" />
          </svg>
          <span className="ml-[7px] pb-0.5 whitespace-nowrap tracking-[0.1px]">硬盘 (1)</span>
          <i className="ml-2 flex-1 h-px bg-[#ddd6c9]" />
        </div>
        <div className="h-[76px] flex items-start pl-8 pt-[13px]">
          <svg width="42" height="48" viewBox="0 0 42 48" fill="none">
            <rect width="42" height="48" rx="1" fill="#bfdada" />
            <path d="M34.500 46.500H1.500V1.500H40.500V48" stroke="#6c7c7b" strokeWidth="3" strokeLinecap="round" />
            <circle cx="21" cy="21" r="10.800" stroke="#6c7c7b" strokeWidth="2.800" />
            <circle cx="21" cy="21" r="2.700" stroke="#6c7c7b" strokeWidth="2.600" />
            <path d="M27 28L34 34" stroke="#6c7c7b" strokeWidth="4.500" strokeLinecap="round" />
          </svg>
          <div className="ml-3.5 -mt-[7px]">
            <div className="leading-5 pl-px tracking-[0.2px]">OS (C:)</div>
            <div className="mt-[3px] w-[235px] h-[15px] flex border-2 border-black rounded-[3px] bg-[#fff8ea] shadow-[2px_2px_0_rgba(0,0,0,0.12)]">
              <div className="w-[165px] border-r-2 border-black bg-[#c5e9e4]" />
            </div>
            <div className="mt-[3px] leading-5 pl-px tracking-[0.1px] text-[#767676]">140 GB 可用，共 475 GB</div>
          </div>
        </div>
        <div className="h-[26px] flex items-center pl-[12px] pr-[9px] text-[#3b3b3b]">
          <svg className="mb-0.5" width="7" height="11" viewBox="0 0 7 11" fill="none" stroke="#111" strokeWidth="1.600">
            <path d="M1 1.500L5.300 5.500L1 9.500Z" />
          </svg>
          <span className="ml-[7px] pb-0.5 whitespace-nowrap tracking-[0.1px]">其他 (1)</span>
          <i className="ml-2 flex-1 h-px bg-[#ddd6c9]" />
        </div>
      </div>
    </div>
    <div className="h-[74px] shrink-0 flex items-start border-t-2 border-black pl-[19px] pt-[11px] text-[#1e395b]">
      <svg className="mt-[10px]" width="47" height="45" viewBox="0 0 47 45" fill="none">
        <path d="M1.500 1.500H45.500V37H1.500Z" fill="#6baed9" stroke="#3f6a85" strokeWidth="3" />
        <path d="M16.500 43.500H30.500" stroke="#3f6a85" strokeWidth="3" strokeLinecap="round" />
      </svg>
      <span className="ml-[19px] w-[158px] text-[18px] leading-[22px] tracking-[-0.2px] text-black whitespace-nowrap">LAPTOP-QFIKRP9R</span>
      <div className="w-[65px] pt-px leading-[23px] tracking-[0.4px] text-[#5f6d7c]">
        <div>工作组:</div>
        <div>处理器:</div>
      </div>
      <div className="w-40 pt-px leading-[23px] whitespace-nowrap">
        <div className="tracking-[-0.65px]">WORKGROUP</div>
        <div className="tracking-[-0.3px]">Intel(R) Core(TM) i7-9...</div>
      </div>
      <div className="w-[49px] pt-px leading-[23px] text-[#5f6d7c]">内存:</div>
      <div className="pt-px leading-[23px] tracking-[-0.75px]">16.0 GB</div>
    </div>
    <div className="h-0.5 shrink-0 flex gap-px">
      <i className="w-[89px] bg-[#463f3e]" />
      <i className="flex-1 bg-[#463f3e]" />
    </div>
    <div className="flex-1 flex items-center pl-[17px] pr-2.5 text-[#1e395b]">
      <span className="flex-1 pb-0.5 text-[16px] leading-5">2 个项目</span>
      <svg width="18" height="16" viewBox="0 0 18 16" fill="none">
        <path d="M.5 .5H5.500V15.500H.5ZM.5 5.500H5.500M.5 10.500H5.500" fill="#fff" stroke="#8a9095" />
        <path d="M2 3H4" stroke="#2b6fa8" strokeWidth="2" />
        <path d="M2 8H4" stroke="#5b8a3a" strokeWidth="2" />
        <path d="M2 13H4" stroke="#b03a2e" strokeWidth="2" />
        <path d="M7 2.500H11.500M13 2.500H18M7 7.500H11.500M13 7.500H18M7 12.500H11.500M13 12.500H18" stroke="#777" />
      </svg>
      <svg className="ml-[10px] mt-0.5" width="18" height="14" viewBox="0 0 18 14">
        <path d="M1 2.500H5.500V1Q5.500 0 6.500 0H11.500Q12.500 0 12.500 1V2.500H17Q18 2.500 18 3.500V13Q18 14 17 14H1Q0 14 0 13V3.500Q0 2.500 1 2.500Z" fill="#82c2c1" />
        <circle cx="9" cy="8" r="3.700" fill="#45566b" stroke="#d5e8e8" />
      </svg>
    </div>
  </div>
);

export default function App() {
  return (
    <div className="relative w-[1920px] h-[1080px] overflow-hidden bg-[#f5a59b] font-['Noto_Sans','Noto_Sans_CJK_SC',sans-serif]">
      <div className="absolute left-[809px] top-0 flex">
        <i className="w-15 h-px bg-[#e0cd93]" />
        <i className="w-[241px] h-px bg-[#ebe1e3]" />
      </div>
      <i className="absolute left-[121px] top-[10px] w-[15px] h-[3px] rounded-full bg-[#8f4646]" />

      <div className={`absolute left-[543px] top-[71px] ${LABEL}`}>...</div>
      <div className={`absolute left-[543px] top-[331px] ${LABEL}`}>...</div>

      <Desk at="a5">证件</Desk>
      <Desk at="a6">mlj</Desk>
      <Desk at="a7">backup</Desk>
      <Desk at="g4">csharp-tm...</Desk>
      <Desk at="g5">mx-langu...</Desk>
      <Desk at="y0" art={<MaxIcon />}>
        Max 8
        <br />
        (64-bit)
      </Desk>
      <Desk at="y1" art={<BlenderIcon />}>blender</Desk>
      <Desk at="z0">MaxMSP</Desk>
      <Desk at="z1">blenders</Desk>
      <Desk at="z2">painting</Desk>
      <Desk at="z3">FL</Desk>
      <Desk at="z4" art={<PdfDoc />}>
        闵乐钧
        <br />
        2020-202...
      </Desk>
      <Desk at="z5">写作</Desk>
      <Desk at="z6" art={<ScriptIcon />}>liberty-to...</Desk>

      <Taskbar />
      <div className="absolute left-[95px] top-4 w-[456px] h-[603px] rounded-[7px] bg-black/15" />
      <StartMenu />
      <Explorer />
    </div>
  );
}
